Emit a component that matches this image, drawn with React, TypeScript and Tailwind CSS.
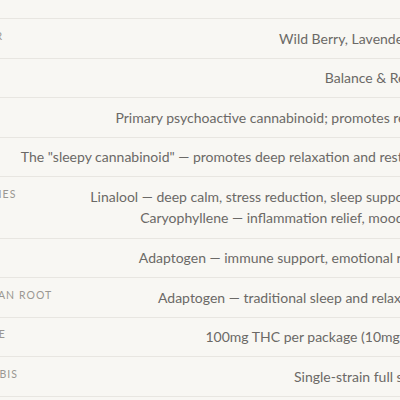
import React from "react";

type Row = { label: string; value: string[] };

const rows: Row[] = [
  { label: "FLAVOR", value: ["Wild Berry, Lavender & Mint"] },
  { label: "MOOD", value: ["Balance & Relaxation"] },
  { label: "THC", value: ["Primary psychoactive cannabinoid; promotes relaxation"] },
  { label: "CBN", value: ['The "sleepy cannabinoid" — promotes deep relaxation and restful sleep'] },
  {
    label: "TERPENES",
    value: [
      "Linalool — deep calm, stress reduction, sleep support & rest",
      "Caryophyllene — inflammation relief, mood balance",
    ],
  },
  { label: "REISHI", value: ["Adaptogen — immune support, emotional resilience"] },
  { label: "VALERIAN ROOT", value: ["Adaptogen — traditional sleep and relaxation aid"] },
  { label: "DOSAGE", value: ["100mg THC per package (10mg per bite)"] },
  { label: "CANNABIS", value: ["Single-strain full spectrum"] },
];

export default function App() {
  return (
    <div
      className="w-[400px] h-[400px] overflow-hidden bg-[#f8f7f3]"
      style={{ fontFamily: "Lato, 'Noto Sans', sans-serif" }}
    >
      <div className="-ml-[43px] w-[497px]">
        {/* tail of the row above */}
        <div className="h-[19px] border-b border-[#e8e6e1]" />
        {rows.map((row) => (
          <div key={row.label} className="flex items-start border-b border-[#e8e6e1] py-[8.5px]">
            <div className="w-[52px] shrink-0 pt-[1px] text-[10.5px] leading-[15px] tracking-[0.1em] text-[#9a9792] whitespace-nowrap">
              {row.label}
            </div>
            <div className="flex-1 text-right text-[14px] leading-[21.6px] text-[#6b6966] whitespace-nowrap">
              {row.value.map((line) => (
                <div key={line}>{line}</div>
              ))}
            </div>
          </div>
        ))}
      </div>
    </div>
  );
}
